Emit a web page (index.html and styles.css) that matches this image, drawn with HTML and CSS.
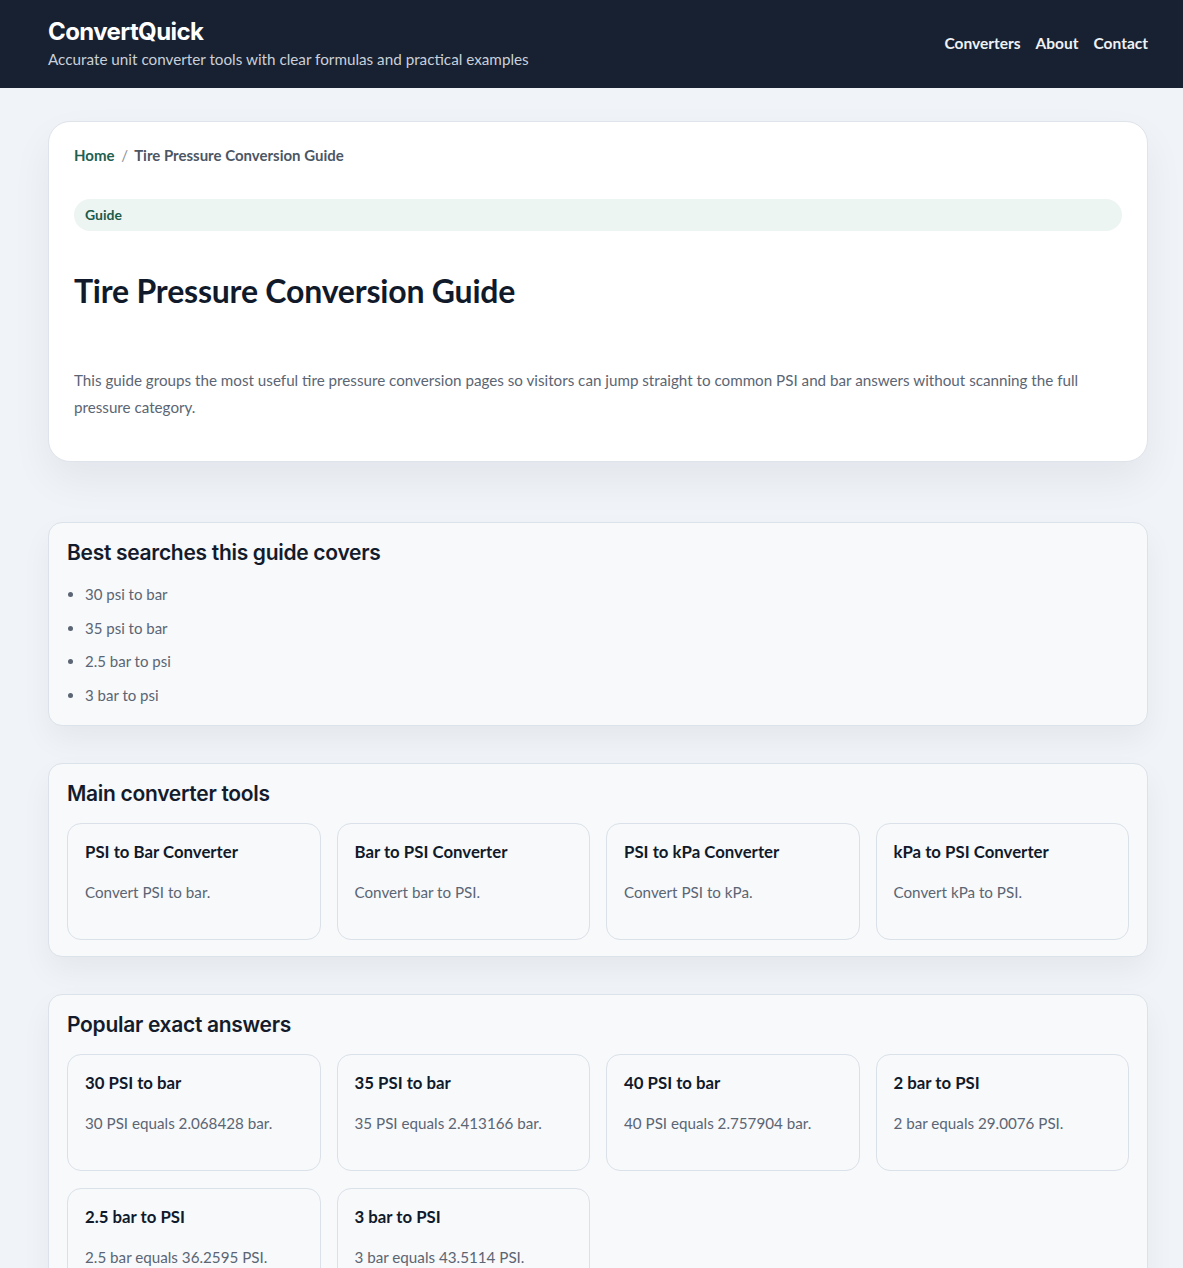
FILE: index.html
```
<!DOCTYPE html>
<html lang="en">
<head>
  <meta charset="UTF-8">
  <meta name="viewport" content="width=device-width, initial-scale=1.0">
  <title>Tire Pressure Conversion Guide - ConvertQuick</title>
  <link rel="stylesheet" href="styles.css">
</head>
<body>
  <header class="site-header">
    <div class="container header-inner">
      <div class="brand">
        <a href="/" class="logo">ConvertQuick</a>
        <p class="tagline">Accurate unit converter tools with clear formulas and practical examples</p>
      </div>
      <nav class="main-nav">
        <a href="/converters">Converters</a>
        <a href="/about">About</a>
        <a href="/contact">Contact</a>
      </nav>
    </div>
  </header>

  <main class="container">
    <section class="hero">
      <div class="breadcrumb">
        <a href="/">Home</a>
        <span class="sep">/</span>
        <span>Tire Pressure Conversion Guide</span>
      </div>
      <div class="badge">Guide</div>
      <h1>Tire Pressure Conversion Guide</h1>
      <p class="intro">This guide groups the most useful tire pressure conversion pages so visitors can jump straight to common PSI and bar answers without scanning the full pressure category.</p>
    </section>

    <section class="panel">
      <h2>Best searches this guide covers</h2>
      <ul class="search-list">
        <li>30 psi to bar</li>
        <li>35 psi to bar</li>
        <li>2.5 bar to psi</li>
        <li>3 bar to psi</li>
      </ul>
    </section>

    <section class="panel">
      <h2>Main converter tools</h2>
      <div class="card-grid">
        <a class="card" href="/psi-to-bar"><h3>PSI to Bar Converter</h3><p>Convert PSI to bar.</p></a>
        <a class="card" href="/bar-to-psi"><h3>Bar to PSI Converter</h3><p>Convert bar to PSI.</p></a>
        <a class="card" href="/psi-to-kpa"><h3>PSI to kPa Converter</h3><p>Convert PSI to kPa.</p></a>
        <a class="card" href="/kpa-to-psi"><h3>kPa to PSI Converter</h3><p>Convert kPa to PSI.</p></a>
      </div>
    </section>

    <section class="panel">
      <h2>Popular exact answers</h2>
      <div class="card-grid">
        <a class="card" href="#"><h3>30 PSI to bar</h3><p>30 PSI equals 2.068428 bar.</p></a>
        <a class="card" href="#"><h3>35 PSI to bar</h3><p>35 PSI equals 2.413166 bar.</p></a>
        <a class="card" href="#"><h3>40 PSI to bar</h3><p>40 PSI equals 2.757904 bar.</p></a>
        <a class="card" href="#"><h3>2 bar to PSI</h3><p>2 bar equals 29.0076 PSI.</p></a>
        <a class="card" href="#"><h3>2.5 bar to PSI</h3><p>2.5 bar equals 36.2595 PSI.</p></a>
        <a class="card" href="#"><h3>3 bar to PSI</h3><p>3 bar equals 43.5114 PSI.</p></a>
      </div>
    </section>
  </main>
</body>
</html>
```

FILE: styles.css
```
* { box-sizing: border-box; }
body { margin: 0; font-family: Lato, "Noto Sans", sans-serif; background: #f0f3f7; color: #5b6573; }
a { text-decoration: none; color: inherit; }
.container { width: 1100px; margin-left: 48px; }

.site-header { background: #182131; height: 88px; }
.header-inner { display: flex; justify-content: space-between; align-items: center; height: 88px; padding-bottom: 4px; }
.logo { display: block; font-family: Inter, sans-serif; font-weight: 700; font-size: 24px; letter-spacing: -0.6px; color: #fff; line-height: 30px; }
.tagline { margin: 3px 0 0; font-size: 15.25px; color: #c9d0da; }
.main-nav { display: flex; gap: 15px; padding-top: 2px; }
.main-nav a { color: #eef2f6; font-weight: 700; font-size: 15.5px; }

.hero { margin-top: 33px; background: #fff; border: 1px solid #dfe4eb; border-radius: 22px; padding: 24px 25px 40px; box-shadow: 0 18px 40px rgba(20, 35, 60, 0.06); }
.breadcrumb { font-size: 15px; font-weight: 700; color: #4c5664; height: 20px; }
.breadcrumb a { color: #21604f; }
.breadcrumb .sep { color: #8a929c; font-weight: 400; margin: 0 3px; }
.badge { margin-top: 33px; background: #edf5f3; color: #1c5a4a; font-weight: 700; font-size: 14px; border-radius: 16px; height: 32px; line-height: 32px; padding: 0 11px; }
.hero h1 { margin: 40px 0 0; font-size: 32px; line-height: 40px; color: #111a2a; letter-spacing: -0.2px; }
.intro { margin: 56px 0 0; font-size: 15.2px; line-height: 27px; }

.panel { background: #f7f9fb; border: 1px solid #dce2e9; border-radius: 14px; padding: 16px 18px 16px; margin-top: 37px; box-shadow: 0 14px 30px rgba(20, 35, 60, 0.05); }
.hero + .panel { margin-top: 60px; }
.panel h2 { margin: 0; font-family: Inter, sans-serif; font-size: 21px; line-height: 28px; font-weight: 600; color: #141c2b; letter-spacing: -0.3px; }
.search-list { margin: 17px 0 4px; padding-left: 18px; font-size: 15px; line-height: 20px; }
.search-list li { margin-bottom: 13.5px; }
.search-list li:last-child { margin-bottom: 0; }

.card-grid { display: grid; grid-template-columns: repeat(4, 1fr); gap: 17px 16px; margin-top: 15px; }
.card { display: block; height: 117px; border: 1px solid #dbe1e8; border-radius: 14px; padding: 18px 17px; background: #f7f9fb; }
.card h3 { margin: 0; font-size: 16.8px; line-height: 20px; color: #111a2a; font-weight: 700; }
.card p { margin: 20px 0 0; font-size: 15.2px; line-height: 20px; }
```
